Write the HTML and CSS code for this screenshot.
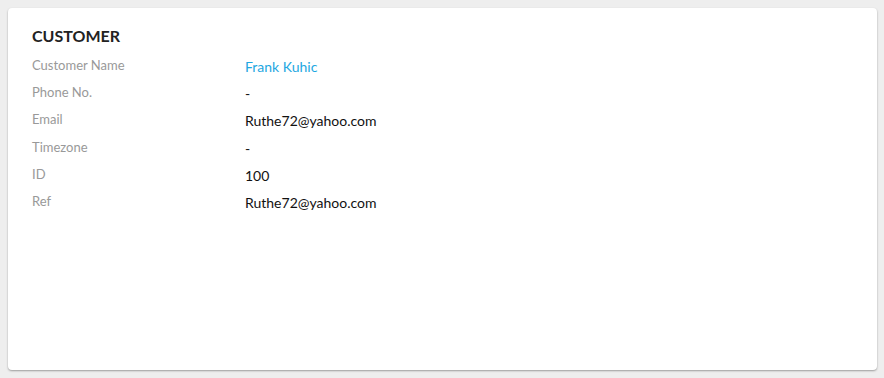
FILE: index.html
```html
<!DOCTYPE html>
<html lang="en">
<head>
    <meta charset="UTF-8">
    <meta name="viewport" content="width=device-width, initial-scale=1.0">
    <title>Customer</title>
    <link rel="stylesheet" href="styles.css">
</head>
<body>
    <div class="card">
        <h2 class="card-title">CUSTOMER</h2>
        <div class="details">
            <div class="label">Customer Name</div>
            <div class="value"><a href="#">Frank Kuhic</a></div>

            <div class="label">Phone No.</div>
            <div class="value">-</div>

            <div class="label">Email</div>
            <div class="value">Ruthe72@yahoo.com</div>

            <div class="label">Timezone</div>
            <div class="value">-</div>

            <div class="label">ID</div>
            <div class="value">100</div>

            <div class="label">Ref</div>
            <div class="value">Ruthe72@yahoo.com</div>
        </div>
    </div>
</body>
</html>
```

FILE: styles.css
```css
/* General Styles */
body {
    font-family: Lato, "Open Sans", sans-serif;
    margin: 0;
    padding: 8px 7px 8px 8px;
    background-color: #eeeeee;
}

/* Card */
.card {
    background-color: white;
    height: 362px;
    box-sizing: border-box;
    padding: 18px 24px;
    border-radius: 4px;
    box-shadow: 0 1px 2px rgba(0, 0, 0, 0.35);
}

.card-title {
    margin: 0 0 8px 0;
    font-size: 16px;
    font-weight: bold;
    color: #222;
    line-height: 20px;
}

/* Details */
.details {
    display: grid;
    grid-template-columns: 213px 1fr;
    grid-auto-rows: 27.2px;
}

.label {
    font-size: 13px;
    color: #999;
    line-height: 20px;
    padding-top: 1px;
}

.value {
    font-size: 14px;
    color: #111;
    line-height: 20px;
    padding-top: 3px;
}

.value a {
    text-decoration: none;
    color: #1ea7e1;
}
```
